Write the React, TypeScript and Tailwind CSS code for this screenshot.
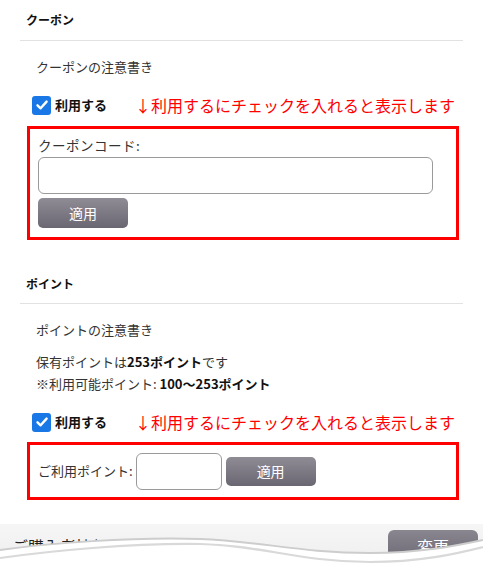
import React from "react";

const font = { fontFamily: '"Noto Sans CJK JP", "Noto Sans", sans-serif' };

function Check() {
  return (
    <span className="w-[19px] h-[19px] rounded-[3px] bg-[#1a78e6] flex items-center justify-center shrink-0">
      <svg width="14" height="14" viewBox="0 0 14 14">
        <path d="M2.5 7.3 L5.6 10.3 L11.6 3.6" fill="none" stroke="#fff" strokeWidth="2.4" strokeLinecap="round" strokeLinejoin="round" />
      </svg>
    </span>
  );
}

function CheckRow({ cls }: { cls: string }) {
  return (
    <div className={`h-[24px] flex items-center pl-[12px] whitespace-nowrap ${cls}`}>
      <Check />
      <span className="ml-[4px] text-[13px] font-bold text-[#111] shrink-0">利用する</span>
      <span className="ml-[28px] text-[16px] text-[#ff0000] shrink-0">↓利用するにチェックを入れると表示します</span>
    </div>
  );
}

const btn =
  "h-[30px] w-[90px] rounded-[5px] bg-gradient-to-b from-[#908c96] to-[#6b6772] text-white text-[14px] flex items-center justify-center shrink-0";

export default function App() {
  return (
    <div className="w-[483px] h-[577px] relative overflow-hidden bg-white text-[#333]" style={font}>
      <div className="px-[20px]">
        <div className="h-[41px] flex items-center pl-[6px] text-[12px] font-bold text-[#111] border-b border-[#e2e2e2]">
          クーポン
        </div>
        <div className="h-[52px] flex items-center pl-[16px] text-[13px]">クーポンの注意書き</div>
        <CheckRow cls="" />
        <div className="mt-[9px] ml-[7px] w-[432px] h-[114px] border-[3px] border-[#ff0000] pl-[8px] pt-[6px]">
          <div className="h-[20px] flex items-center text-[13.5px] text-[#333] tracking-[0.5px]">クーポンコード:</div>
          <div className="mt-[2px] w-[395px] h-[37px] border border-[#9a9a9a] rounded-[6px] bg-white" />
          <div className={`mt-[4px] ${btn}`}>適用</div>
        </div>

        <div className="mt-[25px] h-[39px] flex items-center pl-[6px] text-[12px] font-bold text-[#111] border-b border-[#e2e2e2]">
          ポイント
        </div>
        <div className="pt-[15px] pl-[16px] text-[13px] leading-[22px]">ポイントの注意書き</div>
        <div className="mt-[10px] pl-[16px] text-[13px] leading-[22px]">
          <div>
            保有ポイントは<span className="font-bold text-[#111]">253ポイント</span>です
          </div>
          <div>
            ※利用可能ポイント: <span className="font-bold text-[#111]">100～253ポイント</span>
          </div>
        </div>
        <CheckRow cls="mt-[15px]" />
        <div className="mt-[8px] ml-[7px] w-[432px] h-[58px] border-[3px] border-[#ff0000] pl-[8px] flex items-center">
          <span className="text-[13px] text-[#333] whitespace-nowrap">ご利用ポイント:</span>
          <div className="ml-[3px] w-[86px] h-[37px] border border-[#9a9a9a] rounded-[6px] bg-white shrink-0" />
          <div className={`ml-[4px] !h-[29px] ${btn}`}>適用</div>
        </div>
      </div>

      <div className="mt-[24px] relative h-[53px] bg-gradient-to-b from-[#f6f6f6] to-[#ececec] flex items-start justify-between">
        <span className="ml-[12px] mt-[10px] text-[16px] leading-[24px] text-[#222]">ご購入者情報</span>
        <div className="mt-[6px] mr-[5px] w-[90px] h-[32px] rounded-[6px] bg-gradient-to-b from-[#8a8690] to-[#6d6974] text-white text-[16px] flex items-center justify-center">
          変更
        </div>
        <svg className="absolute left-0 top-0" width="483" height="53" viewBox="0 0 483 53">
          <path
            d="M0,26 C50,19 130,13 200,15 C260,17 300,29 370,29 C420,29 455,22 483,16 L483,53 L0,53 Z"
            fill="#fff"
          />
          <path d="M0,26 C50,19 130,13 200,15 C260,17 300,29 370,29 C420,29 455,22 483,16" fill="none" stroke="#cdcdcd" strokeWidth="2" />
          <path d="M0,34 C50,27 130,19 200,20 C260,21 300,38 370,38 C420,38 455,30 483,23" fill="none" stroke="#d9d9d9" strokeWidth="2.2" />
        </svg>
      </div>
    </div>
  );
}
